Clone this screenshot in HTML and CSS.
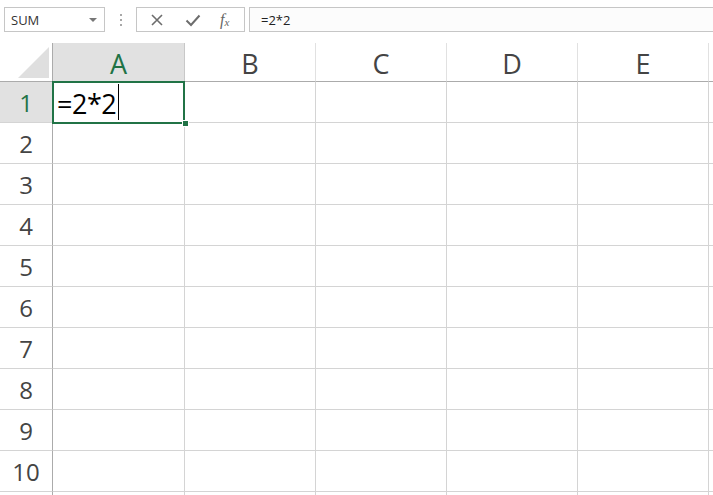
FILE: index.html
```html
<!DOCTYPE html>
<html>
<head>
<meta charset="utf-8">
<link rel="stylesheet" href="styles.css">
</head>
<body>
<div class="toolbar">
  <div class="namebox"><span>SUM</span><span class="arrow"></span></div>
  <div class="dots"><i></i><i></i><i></i></div>
  <div class="buttons">
    <svg class="ico" width="14" height="14" viewBox="0 0 14 14"><path d="M2 2 L12 12 M12 2 L2 12" stroke="#6d6d6d" stroke-width="1.6" fill="none"/></svg>
    <svg class="ico" width="16" height="14" viewBox="0 0 16 14"><path d="M1.5 7.5 L6 12 L14.5 2.5" stroke="#6d6d6d" stroke-width="2" fill="none"/></svg>
    <span class="fx">f<sub>x</sub></span>
  </div>
  <div class="formula">=2*2</div>
</div>
<div class="sheet">
  <div class="corner"><span class="tri"></span></div>
  <div class="colh sel">A</div>
  <div class="colh">B</div>
  <div class="colh">C</div>
  <div class="colh">D</div>
  <div class="colh">E</div>
  <div class="colh rest"></div>

  <div class="rowh sel">1</div>
  <div class="cell active"><span class="val">=2*2</span><span class="caret"></span><span class="selbox"></span><span class="handle"></span></div>
  <div class="cell"></div><div class="cell"></div><div class="cell"></div><div class="cell"></div><div class="cell rest"></div>

  <div class="rowh">2</div><div class="cell"></div><div class="cell"></div><div class="cell"></div><div class="cell"></div><div class="cell"></div><div class="cell rest"></div>
  <div class="rowh">3</div><div class="cell"></div><div class="cell"></div><div class="cell"></div><div class="cell"></div><div class="cell"></div><div class="cell rest"></div>
  <div class="rowh">4</div><div class="cell"></div><div class="cell"></div><div class="cell"></div><div class="cell"></div><div class="cell"></div><div class="cell rest"></div>
  <div class="rowh">5</div><div class="cell"></div><div class="cell"></div><div class="cell"></div><div class="cell"></div><div class="cell"></div><div class="cell rest"></div>
  <div class="rowh">6</div><div class="cell"></div><div class="cell"></div><div class="cell"></div><div class="cell"></div><div class="cell"></div><div class="cell rest"></div>
  <div class="rowh">7</div><div class="cell"></div><div class="cell"></div><div class="cell"></div><div class="cell"></div><div class="cell"></div><div class="cell rest"></div>
  <div class="rowh">8</div><div class="cell"></div><div class="cell"></div><div class="cell"></div><div class="cell"></div><div class="cell"></div><div class="cell rest"></div>
  <div class="rowh">9</div><div class="cell"></div><div class="cell"></div><div class="cell"></div><div class="cell"></div><div class="cell"></div><div class="cell rest"></div>
  <div class="rowh">10</div><div class="cell"></div><div class="cell"></div><div class="cell"></div><div class="cell"></div><div class="cell"></div><div class="cell rest"></div>
  <div class="rowh tail"></div><div class="cell tail"></div><div class="cell tail"></div><div class="cell tail"></div><div class="cell tail"></div><div class="cell tail"></div><div class="cell rest tail"></div>
</div>
</body>
</html>
```
FILE: styles.css
```css
html, body {
  margin: 0;
  padding: 0;
  background: #ffffff;
  overflow: hidden;
  width: 713px;
  height: 495px;
}
body {
  font-family: "Open Sans", "Liberation Sans", sans-serif;
}
.toolbar {
  display: flex;
  align-items: center;
  height: 43px;
  padding: 0 0 4px 4px;
  box-sizing: border-box;
}
.namebox {
  width: 101px;
  height: 25px;
  box-sizing: border-box;
  border: 1px solid #c6c6c6;
  background: #fff;
  display: flex;
  align-items: center;
  justify-content: space-between;
  padding: 0 7px 0 6px;
  font-size: 13px;
  color: #333;
}
.arrow {
  width: 0;
  height: 0;
  border-left: 4px solid transparent;
  border-right: 4px solid transparent;
  border-top: 4px solid #777;
  margin-top: 1px;
}
.dots {
  width: 31px;
  display: flex;
  flex-direction: column;
  align-items: center;
  gap: 3px;
}
.dots i {
  display: block;
  width: 2px;
  height: 2px;
  background: #a8a8a8;
}
.buttons {
  width: 109px;
  height: 25px;
  box-sizing: border-box;
  border: 1px solid #c6c6c6;
  background: #fff;
  display: flex;
  align-items: center;
  padding-left: 13px;
  gap: 0;
}
.buttons .ico:nth-child(1) { margin-right: 21px; }
.buttons .ico:nth-child(2) { margin-right: 19px; }
.fx {
  font-family: "Liberation Serif", serif;
  font-style: italic;
  font-size: 16px;
  color: #666;
  line-height: 1;
}
.fx sub {
  font-size: 11px;
  vertical-align: -1px;
}
.formula {
  flex: 1;
  margin-left: 4px;
  height: 25px;
  box-sizing: border-box;
  border: 1px solid #c6c6c6;
  border-right: none;
  background: #fcfcfc;
  font-size: 13px;
  color: #222;
  display: flex;
  align-items: center;
  padding-left: 11px;
}
.sheet {
  display: grid;
  grid-template-columns: 53px 132px 131px 131px 131px 131px 1fr;
  grid-template-rows: 39px repeat(10, 41px) 4px;
}
.corner {
  border-right: 1px solid #ababab;
  border-bottom: 1px solid #ababab;
  position: relative;
  box-sizing: border-box;
}
.tri {
  position: absolute;
  right: 3px;
  bottom: 3px;
  width: 0;
  height: 0;
  border-left: 31px solid transparent;
  border-bottom: 31px solid #dfdfdf;
}
.colh {
  box-sizing: border-box;
  border-right: 1px solid #e1e1e1;
  border-bottom: 1px solid #ababab;
  display: flex;
  align-items: center;
  justify-content: center;
  font-size: 27px;
  color: #444;
  padding-top: 2px;
}
.colh.sel {
  background: #e1e1e1;
  color: #217346;
  border-right-color: #c8c8c8;
}
.colh.rest { border-right: none; }
.rowh {
  box-sizing: border-box;
  border-right: 1px solid #ababab;
  border-bottom: 1px solid #d4d4d4;
  display: flex;
  align-items: center;
  justify-content: center;
  font-size: 24px;
  color: #444;
  padding-top: 1px;
}
.rowh.sel {
  background: #e1e1e1;
  color: #217346;
}
.cell {
  box-sizing: border-box;
  border-right: 1px solid #d4d4d4;
  border-bottom: 1px solid #d4d4d4;
}
.tail { border-bottom: none; padding: 0; }
.cell.rest { border-right: none; }
.cell.active {
  position: relative;
  display: flex;
  align-items: center;
  padding-left: 4px;
}
.val {
  font-size: 27px;
  color: #000;
  letter-spacing: -0.5px;
  line-height: 1;
  margin-top: 2px;
}
.caret {
  width: 1px;
  height: 36px;
  background: #000;
  margin-left: 2px;
}
.selbox {
  position: absolute;
  left: -1px;
  top: -1px;
  width: 133px;
  height: 43px;
  box-sizing: border-box;
  border: 2px solid #217346;
}
.handle {
  position: absolute;
  left: 129px;
  top: 38px;
  width: 5px;
  height: 5px;
  background: #217346;
  border: 1px solid #fff;
}
```
